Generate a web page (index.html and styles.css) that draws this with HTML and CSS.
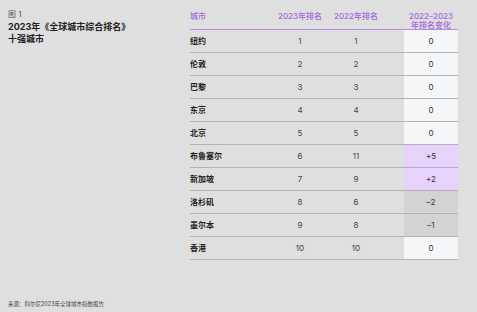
FILE: index.html
```html
<!DOCTYPE html>
<html lang="zh">
<head>
<meta charset="utf-8">
<link rel="stylesheet" href="styles.css">
</head>
<body>
<div class="page">
  <div class="main">
    <div class="intro">
      <div class="fig">图 1</div>
      <div class="title">2023年《全球城市综合排名》<br>十强城市</div>
    </div>
    <div class="table">
      <div class="row head">
        <div class="c city">城市</div>
        <div class="c num">2023年排名</div>
        <div class="c num">2022年排名</div>
        <div class="c gap"></div>
        <div class="c num">2022–2023<br>年排名变化</div>
      </div>
      <div class="row"><div class="c city">纽约</div><div class="c num">1</div><div class="c num">1</div><div class="c gap"></div><div class="c chg same">0</div></div>
      <div class="row"><div class="c city">伦敦</div><div class="c num">2</div><div class="c num">2</div><div class="c gap"></div><div class="c chg same">0</div></div>
      <div class="row"><div class="c city">巴黎</div><div class="c num">3</div><div class="c num">3</div><div class="c gap"></div><div class="c chg same">0</div></div>
      <div class="row"><div class="c city">东京</div><div class="c num">4</div><div class="c num">4</div><div class="c gap"></div><div class="c chg same">0</div></div>
      <div class="row"><div class="c city">北京</div><div class="c num">5</div><div class="c num">5</div><div class="c gap"></div><div class="c chg same">0</div></div>
      <div class="row"><div class="c city">布鲁塞尔</div><div class="c num">6</div><div class="c num">11</div><div class="c gap"></div><div class="c chg up">+5</div></div>
      <div class="row"><div class="c city">新加坡</div><div class="c num">7</div><div class="c num">9</div><div class="c gap"></div><div class="c chg up">+2</div></div>
      <div class="row"><div class="c city">洛杉矶</div><div class="c num">8</div><div class="c num">6</div><div class="c gap"></div><div class="c chg down">–2</div></div>
      <div class="row"><div class="c city">墨尔本</div><div class="c num">9</div><div class="c num">8</div><div class="c gap"></div><div class="c chg down">–1</div></div>
      <div class="row"><div class="c city">香港</div><div class="c num">10</div><div class="c num">10</div><div class="c gap"></div><div class="c chg same">0</div></div>
    </div>
  </div>
  <div class="source">来源：科尔尼2023年全球城市指数报告</div>
</div>
</body>
</html>
```

FILE: styles.css
```css
* { box-sizing: border-box; }
html, body { margin: 0; padding: 0; }
body {
  background: #dfdfdf;
  font-family: "Inter", "Noto Sans CJK SC", sans-serif;
  color: #333;
}
.page {
  width: 477px;
  height: 312px;
  display: flex;
  flex-direction: column;
  padding: 0 0 0 8px;
}
.main {
  display: flex;
  padding-top: 9px;
}
.intro {
  width: 182px;
}
.fig {
  font-size: 8px;
  line-height: 10px;
  color: #555;
}
.title {
  margin-top: 2px;
  font-size: 9px;
  line-height: 12px;
  font-weight: 700;
  color: #222;
}
.table {
  width: 268px;
  padding-top: 3px;
}
.row {
  display: grid;
  grid-template-columns: 80px 60px 52px 22px 54px;
  height: 23px;
  border-bottom: 1px solid #b3b3b3;
}
.row.head {
  height: 18px;
  border-bottom: 1px solid #b98ae6;
  color: #a468e0;
}
.c {
  display: flex;
  align-items: center;
  font-size: 8px;
  line-height: 9px;
}
.head .c {
  align-items: flex-start;
  text-align: center;
  font-weight: 500;
}
.city {
  font-weight: 700;
  color: #222;
}
.head .city {
  color: #a468e0;
}
.num {
  justify-content: center;
  color: #444;
  text-align: center;
}
.head .num { color: #a468e0; }
.chg {
  justify-content: center;
  color: #333;
}
.same { background: #f5f6f8; }
.up { background: #e6d2fa; }
.down { background: #d3d3d3; }
.source {
  margin-top: auto;
  margin-bottom: 4px;
  font-size: 5.5px;
  line-height: 7px;
  color: #444;
}
```
